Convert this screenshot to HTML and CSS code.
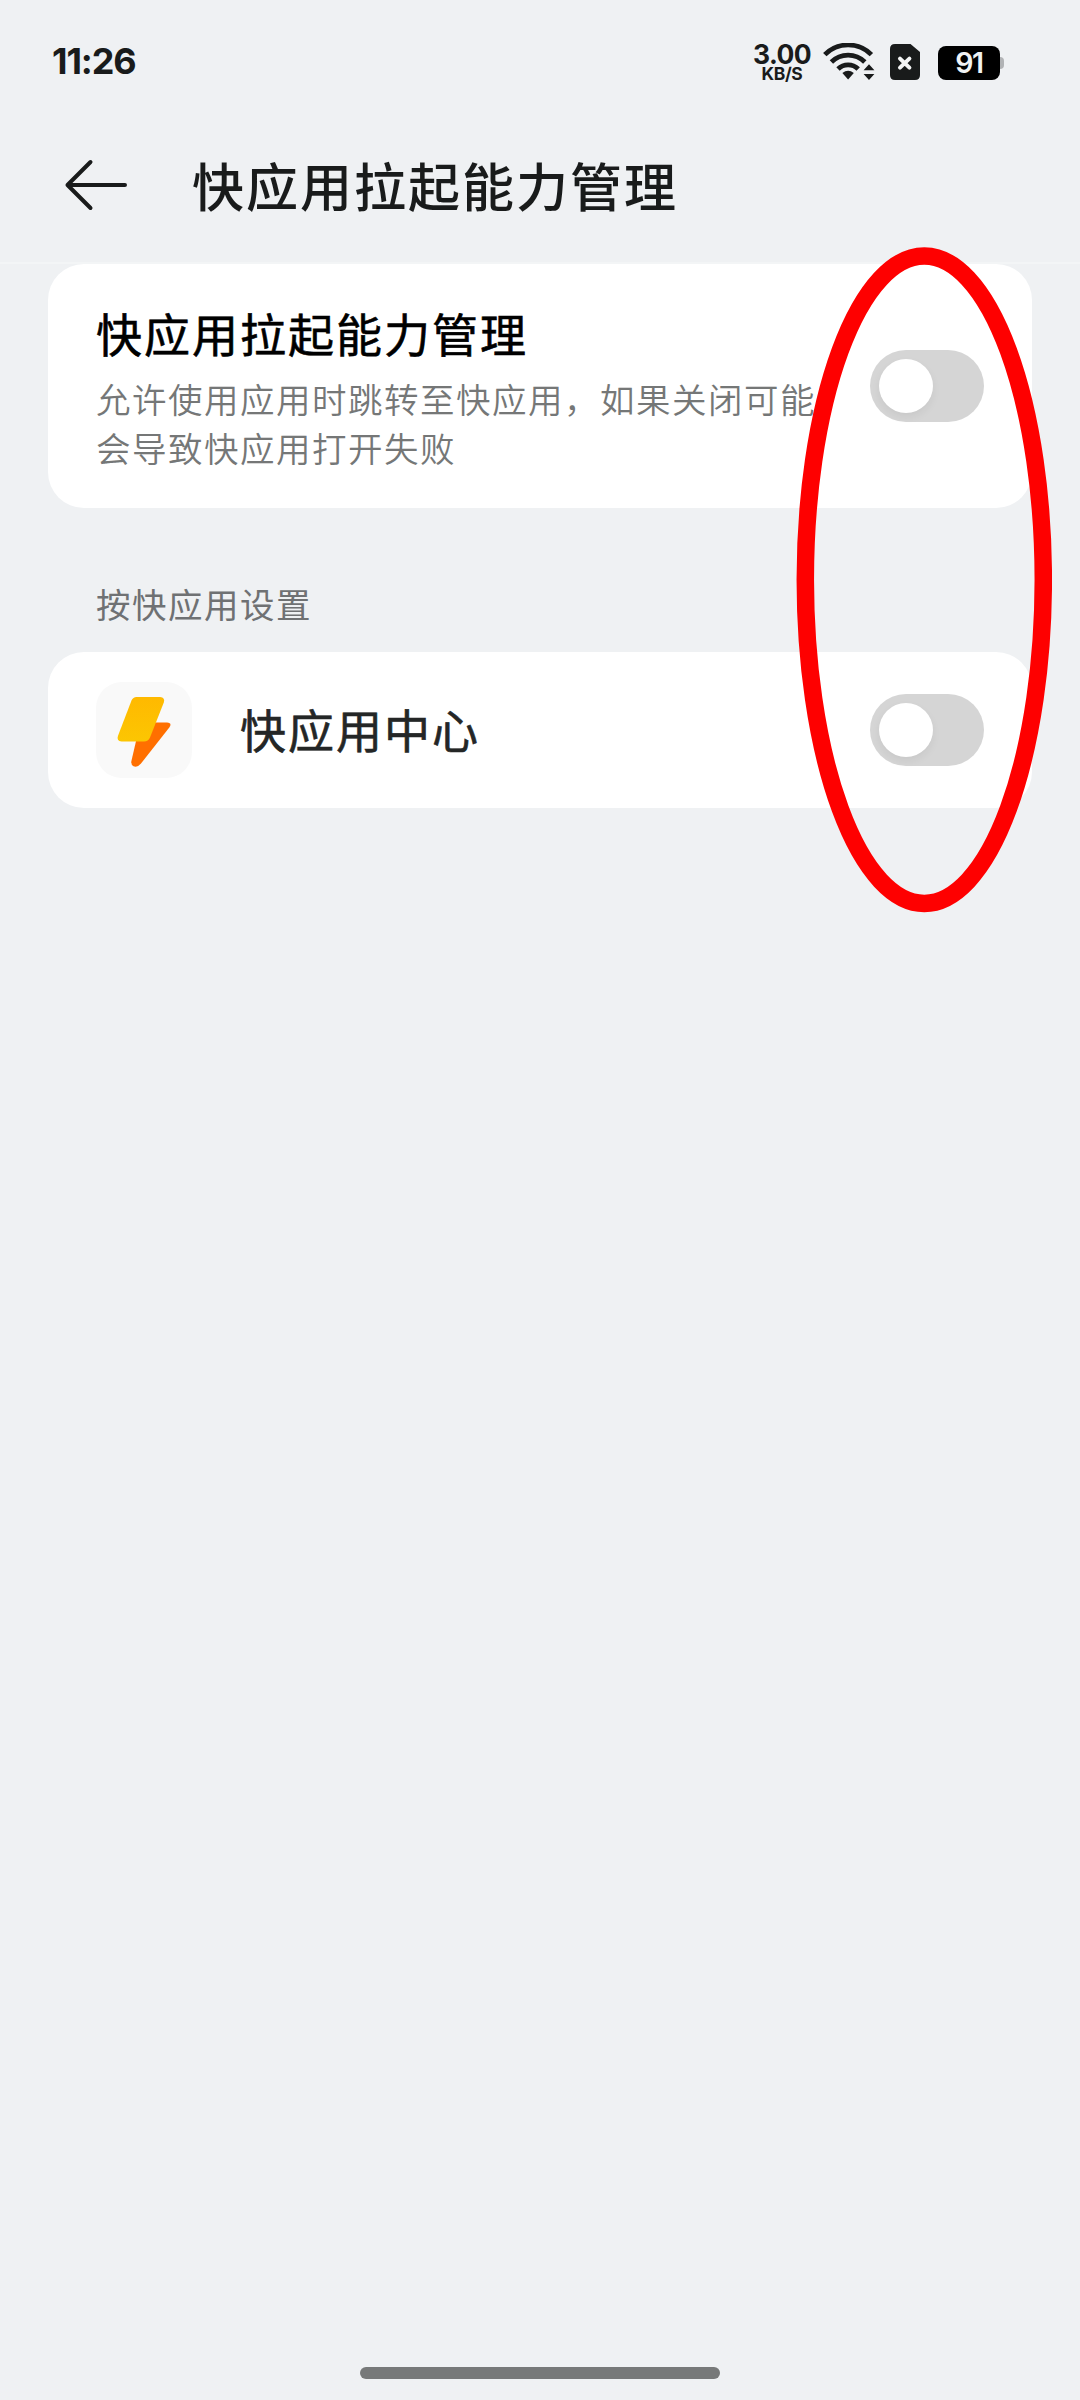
FILE: index.html
```html
<!DOCTYPE html>
<html lang="zh-CN">
<head>
<meta charset="utf-8">
<title>快应用拉起能力管理</title>
<link rel="stylesheet" href="styles.css">
</head>
<body>
<div class="screen">
  <header class="status">
    <span class="time">11:26</span>
    <div class="indicators">
      <div class="speed"><span class="rate">3.00</span><span class="unit">KB/S</span></div>
      <svg class="wifi" width="52" height="38" viewBox="0 0 52 38" fill="none">
        <path d="M1.8 11.6A33 33 0 0 1 48.4 11.6M8.4 19A23.6 23.6 0 0 1 41.8 19M15 26A14.4 14.4 0 0 1 35.2 26" stroke="#191b1b" stroke-width="4.8"/>
        <path d="M19.4 30Q25.1 25.4 30.8 30L25.1 36.6Z" fill="#191b1b"/>
        <path d="M40.6 27.2H51.4L46 21.2ZM40.6 31H51.4L46 37Z" fill="#191b1b"/>
      </svg>
      <svg class="sim" width="30" height="36" viewBox="0 0 30 36">
        <path d="M5 0H20.5L30 8V31Q30 36 25 36H5Q0 36 0 31V5Q0 0 5 0Z" fill="#191b1b"/>
        <path d="M10 14.6L19.4 23.6M19.4 14.6L10 23.6" stroke="#f4f5f5" stroke-width="4" stroke-linecap="round"/>
      </svg>
      <div class="battery"><span class="level">91</span></div>
    </div>
  </header>
  <nav class="bar">
    <svg class="back" width="64" height="54" viewBox="0 0 64 54" fill="none" stroke="#191b1b" stroke-width="4" stroke-linecap="round" stroke-linejoin="round">
      <path d="M26.5 4L3.5 27L26.5 50M3.5 27H61"/>
    </svg>
    <h1 class="title">快应用拉起能力管理</h1>
  </nav>
  <main class="content">
    <section class="card card-main">
      <div class="copy">
        <h2 class="name">快应用拉起能力管理</h2>
        <p class="desc">允许使用应用时跳转至快应用，如果关闭可能<br>会导致快应用打开失败</p>
      </div>
      <span class="toggle"><span class="knob"></span></span>
    </section>
    <h3 class="label">按快应用设置</h3>
    <section class="card card-app">
      <svg class="app-icon" width="96" height="96" viewBox="0 0 96 96">
        <defs>
          <linearGradient id="gold" x1="0" y1="0" x2="0" y2="1"><stop offset="0" stop-color="#ffb900"/><stop offset="1" stop-color="#fcc602"/></linearGradient>
        </defs>
        <rect width="96" height="96" rx="26" fill="#f9f9f9"/>
        <path d="M58 40.5H71Q76.5 41 73.3 45.5L45 81.5Q41.5 85.8 37.5 84.2Q35 83 35.3 79.5L40.5 57Z" fill="#ff6f00"/>
        <path d="M40.5 15H64Q69.5 15.5 67.8 20.5L54 55.5Q52.3 59.5 48 59.5H25.5Q20.2 58.8 22 53.7L35.5 18.5Q37 15 40.5 15Z" fill="url(#gold)"/>
      </svg>
      <h2 class="name app-name">快应用中心</h2>
      <span class="toggle"><span class="knob"></span></span>
    </section>
  </main>
  <footer class="home"><span class="handle"></span></footer>
  <svg class="mark" width="256" height="666" viewBox="0 0 256 666"><ellipse cx="128.3" cy="332.7" rx="119" ry="323.7" fill="none" stroke="#fe0000" stroke-width="17.5"/></svg>
</div>
</body>
</html>
```
FILE: styles.css
```css
* { box-sizing: border-box; margin: 0; padding: 0; }
body { background: #eff1f3; font-family: "Noto Sans CJK SC", sans-serif; color: #191b1b; }
.screen { position: relative; width: 1080px; height: 2400px; display: flex; flex-direction: column; overflow: hidden; }
.status { height: 124px; padding: 0 76px 0 52px; display: flex; justify-content: space-between; font-family: Inter, sans-serif; }
.time { padding-top: 39px; font-size: 36px; line-height: 44px; font-weight: 650; letter-spacing: -1.1px; }
.indicators { display: flex; padding-top: 43px; }
.speed { display: flex; flex-direction: column; align-items: center; width: 60px; margin-right: 11px; font-weight: 700; white-space: nowrap; }
.rate { font-size: 26.5px; line-height: 22px; letter-spacing: -0.6px; font-weight: 650; }
.unit { font-size: 17.5px; line-height: 18px; letter-spacing: -0.4px; font-weight: 650; }
.wifi { margin-right: 15px; }
.sim { margin: 1px 18px 0 0; }
.battery { position: relative; width: 62px; height: 34px; margin: 3px 4px 0 0; border-radius: 8px; background: #000; display: flex; align-items: center; justify-content: center; }
.battery::after { content: ""; position: absolute; left: 62px; top: 11px; width: 4px; height: 12px; border-radius: 0 4px 4px 0; background: #b1b3b5; }
.level { color: #f1f3f4; font-size: 28.5px; line-height: 36px; font-weight: 600; letter-spacing: -1.5px; }
.bar { height: 140px; padding-left: 64px; display: flex; align-items: flex-start; border-bottom: 2px solid #f3f5f6; }
.back { margin: 34px 64px 0 0; }
.title { font-size: 52px; line-height: 76px; font-weight: 500; letter-spacing: 2px; padding-top: 23px; }
.content { flex: 1; padding: 0 48px; }
.card { display: flex; align-items: flex-start; background: #fff; border-radius: 36px; padding: 0 48px; }
.card-main { height: 244px; }
.copy { flex: 1; padding-top: 34px; }
.name { font-size: 46px; line-height: 68px; font-weight: 400; -webkit-text-stroke: 0.6px currentColor; letter-spacing: 2px; color: #000; }
.desc { font-size: 34.5px; line-height: 49px; letter-spacing: 1.5px; color: #757777; padding-top: 8px; white-space: nowrap; font-weight: 350; }
.toggle { flex: none; width: 114px; height: 72px; border-radius: 36px; background: #d5d5d5; padding: 9px; }
.knob { display: block; width: 54px; height: 54px; border-radius: 50%; background: #fff; box-shadow: 0 4px 8px rgba(0,0,0,.06); }
.card-main .toggle { margin-top: 86px; }
.label { height: 144px; padding: 70px 0 0 48px; font-size: 34.5px; line-height: 50px; font-weight: 400; letter-spacing: 1.5px; color: #6f7173; }
.card-app { height: 156px; align-items: center; }
.app-icon { flex: none; margin-right: 48px; }
.app-name { flex: 1; color: #242626; padding-bottom: 4px; }
.home { height: 33px; display: flex; justify-content: center; }
.handle { width: 360px; height: 12px; border-radius: 6px; background: #777979; }
.mark { position: absolute; left: 796px; top: 247px; }
```
